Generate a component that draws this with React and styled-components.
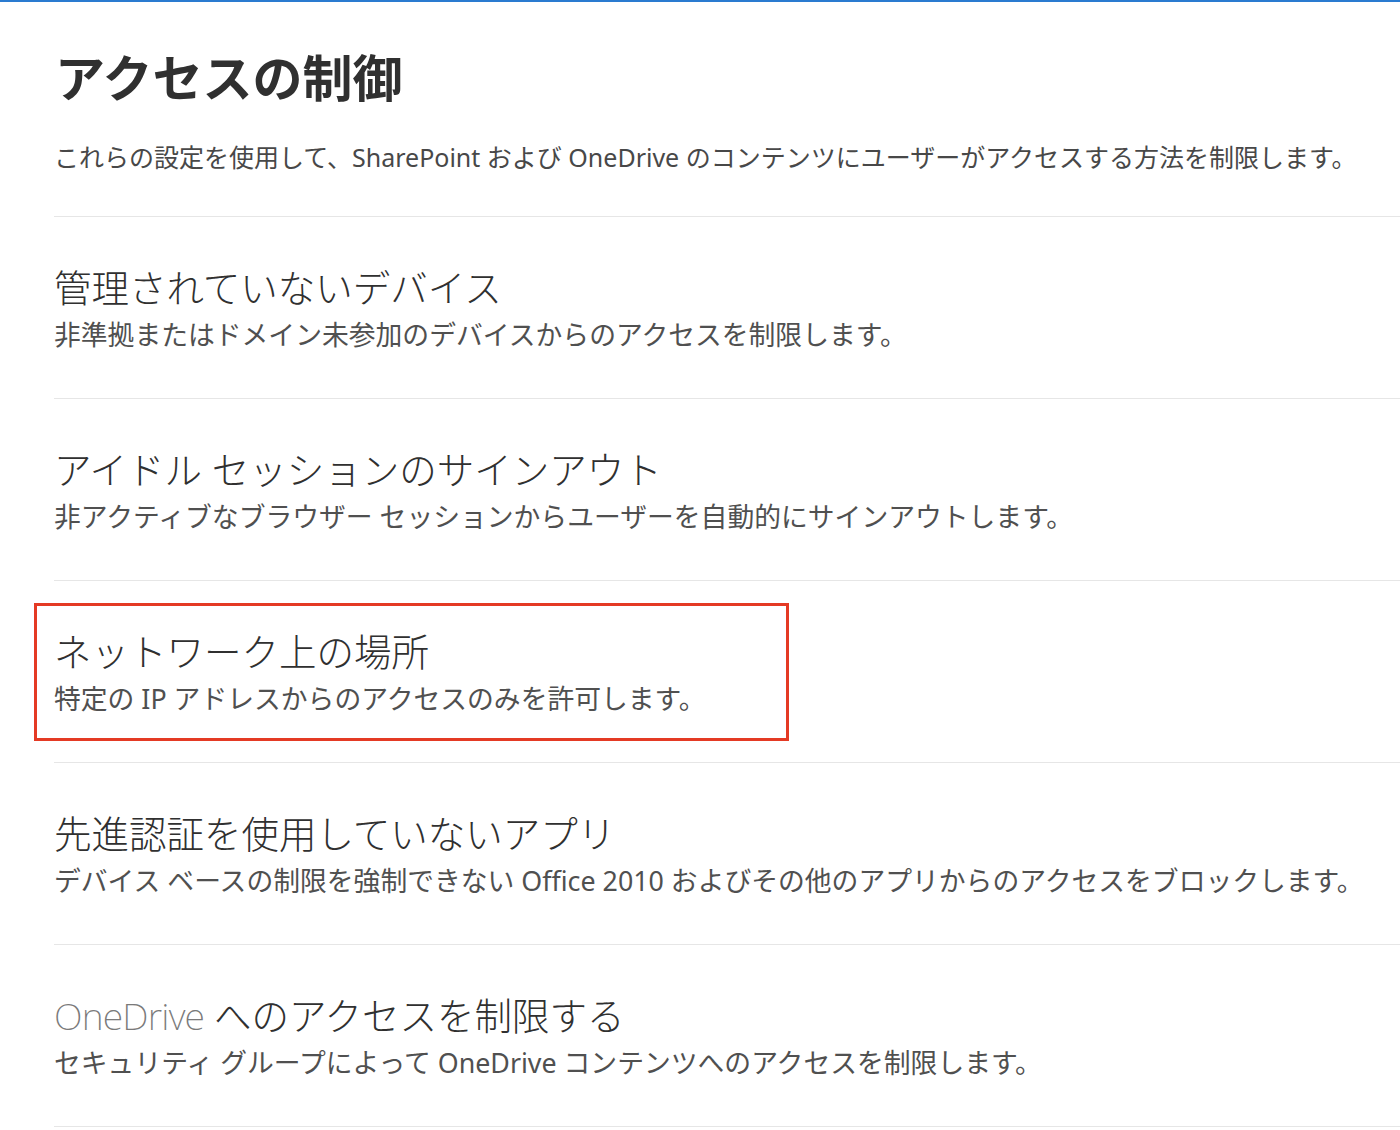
import React from "react";
import styled, { createGlobalStyle } from "styled-components";

const Global = createGlobalStyle`
  html, body { margin: 0; padding: 0; background: #fff; }
  body { font-family: "Noto Sans", "Noto Sans CJK JP", sans-serif; }
`;

const Page = styled.div`
  width: 1400px;
  min-height: 1130px;
  border-top: 2px solid #2a7bd0;
  box-sizing: border-box;
  padding-left: 54px;
  overflow: hidden;
`;

const Header = styled.header`
  padding-top: 46px;
  padding-bottom: 41px;
  border-bottom: 1px solid #e6e6e6;
`;

const PageTitle = styled.h1`
  margin: 0 0 0 1px;
  font-size: 50px;
  line-height: 60px;
  font-weight: 700;
  color: #303030;
`;

const PageDesc = styled.p`
  margin: 31px 0 0 0;
  font-size: 25px;
  line-height: 36px;
  color: #484848;
  white-space: nowrap;
`;

const Section = styled.section`
  position: relative;
  padding: 47px 0 45px 0;
  border-bottom: 1px solid #e6e6e6;
`;

const SectionTitle = styled.h2`
  margin: 0;
  font-size: 37.5px;
  line-height: 48px;
  font-weight: 300;
  color: #303030;
  white-space: nowrap;
`;

const Light = styled.span`
  font-weight: 200;
  color: #7a7a7a;
  letter-spacing: -0.8px;
`;

const SectionDesc = styled.p`
  margin: 5px 0 0;
  font-size: 26.8px;
  line-height: 36px;
  color: #505050;
  white-space: nowrap;
`;

const Highlight = styled.div`
  position: absolute;
  left: -20px;
  top: 22px;
  width: 755px;
  height: 138px;
  border: 3px solid #e43a24;
  box-sizing: border-box;
  pointer-events: none;
`;

const sections = [
  { title: "管理されていないデバイス", desc: "非準拠またはドメイン未参加のデバイスからのアクセスを制限します。" },
  { title: "アイドル セッションのサインアウト", desc: "非アクティブなブラウザー セッションからユーザーを自動的にサインアウトします。" },
  { title: "ネットワーク上の場所", desc: "特定の IP アドレスからのアクセスのみを許可します。", highlight: true },
  { title: "先進認証を使用していないアプリ", desc: "デバイス ベースの制限を強制できない Office 2010 およびその他のアプリからのアクセスをブロックします。" },
  {
    title: (
      <>
        <Light>OneDrive</Light> へのアクセスを制限する
      </>
    ),
    desc: "セキュリティ グループによって OneDrive コンテンツへのアクセスを制限します。",
  },
];

export default function App() {
  return (
    <>
      <Global />
      <Page>
        <Header>
          <PageTitle>アクセスの制御</PageTitle>
          <PageDesc>
            これらの設定を使用して、SharePoint および OneDrive のコンテンツにユーザーがアクセスする方法を制限します。
          </PageDesc>
        </Header>
        {sections.map((s, i) => (
          <Section key={i}>
            {s.highlight && <Highlight />}
            <SectionTitle>{s.title}</SectionTitle>
            <SectionDesc>{s.desc}</SectionDesc>
          </Section>
        ))}
      </Page>
    </>
  );
}
